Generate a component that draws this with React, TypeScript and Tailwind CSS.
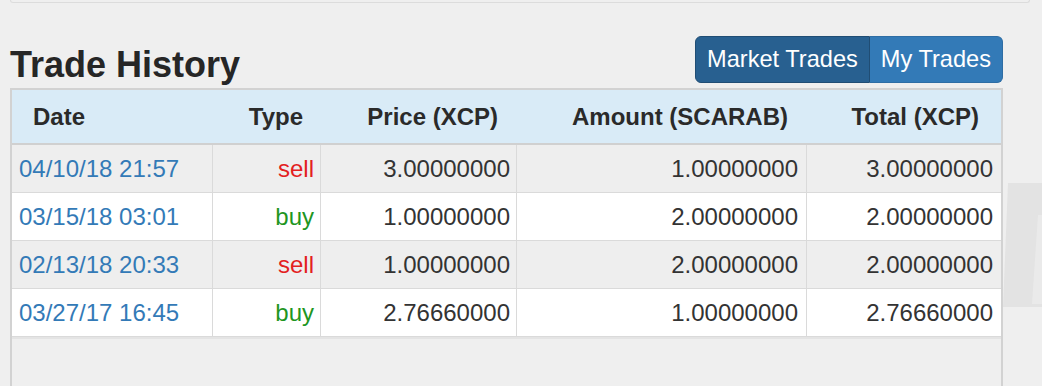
const trades = [
  { date: "04/10/18 21:57", type: "sell", price: "3.00000000", amount: "1.00000000", total: "3.00000000" },
  { date: "03/15/18 03:01", type: "buy", price: "1.00000000", amount: "2.00000000", total: "2.00000000" },
  { date: "02/13/18 20:33", type: "sell", price: "1.00000000", amount: "2.00000000", total: "2.00000000" },
  { date: "03/27/17 16:45", type: "buy", price: "2.76660000", amount: "1.00000000", total: "2.76660000" },
];

const cols = "grid grid-cols-[201px_108px_196px_290px_193px]";

const Watermark = () => (
  <svg
    className="absolute left-[1003px] top-[180px]"
    width="39"
    height="130"
    viewBox="0 0 39 130"
  >
    <path d="M5 3 L39 3 L39 127 L0 127 Z" fill="#e3e3e3" />
    <path d="M35 35 L39 35 L39 124 L29 124 Z" fill="#eaeaea" />
  </svg>
);

export default function App() {
  return (
    <div
      className="relative w-[1042px] h-[386px] overflow-hidden bg-[#efefef] text-[#333]"
      style={{ fontFamily: '"Liberation Sans", Arial, sans-serif' }}
    >
      <Watermark />

      {/* panel above */}
      <div className="ml-[10px] w-[1020px] h-[3px] border-x border-b border-[#dcdcdc] rounded-b-[3px]"></div>

      {/* title + tabs */}
      <div className="relative mt-[33px] ml-[10px] w-[993px] h-[47px] flex items-end justify-between">
        <h2 className="text-[36px] leading-[36px] font-bold text-[#262626]">Trade History</h2>
        <div className="flex h-[47px] text-[23.6px] leading-[33.6px] text-white">
          <button className="h-full px-[11px] bg-[#286090] border border-[#204d74] rounded-l-[6px]">
            Market Trades
          </button>
          <button className="h-full px-[11px] bg-[#337ab7] border border-[#2e6da4] border-l-0 rounded-r-[6px]">
            My Trades
          </button>
        </div>
      </div>

      {/* table */}
      <div className="relative mt-[5px] ml-[10px] w-[993px] h-[320px] border-2 border-[#d2d2d2]">
        <div className={`${cols} h-[55px] items-center bg-[#d9ebf7] border-b-2 border-[#d0d0d0] text-[24px] leading-[33.6px] font-bold text-[#2a2a2a]`}>
          <div className="pl-[21px]">Date</div>
          <div className="text-right pr-[18px]">Type</div>
          <div className="text-right pr-[19px]">Price (XCP)</div>
          <div className="text-right pr-[19px]">Amount (SCARAB)</div>
          <div className="text-right pr-[21px]">Total (XCP)</div>
        </div>
        {trades.map((t, i) => (
          <div
            key={t.date}
            className={`${cols} h-[48px] border-b border-[#dadada] text-[24px] leading-[33.6px] ${
              i % 2 === 0 ? "bg-[#eeeeee]" : "bg-white"
            }`}
          >
            <div className="flex items-center px-[7px] border-r border-[#dadada] text-[#337ab7]">{t.date}</div>
            <div
              className={`flex items-center justify-end px-[6px] border-r border-[#dadada] ${
                t.type === "sell" ? "text-[#e3211f]" : "text-[#1f961f]"
              }`}
            >
              {t.type}
            </div>
            <div className="flex items-center justify-end px-[6px] border-r border-[#dadada]">{t.price}</div>
            <div className="flex items-center justify-end px-[8px] border-r border-[#dadada]">{t.amount}</div>
            <div className="flex items-center justify-end px-[7px]">{t.total}</div>
          </div>
        ))}
        <div className="h-[2px] bg-[#e4e4e4]"></div>
      </div>
    </div>
  );
}
